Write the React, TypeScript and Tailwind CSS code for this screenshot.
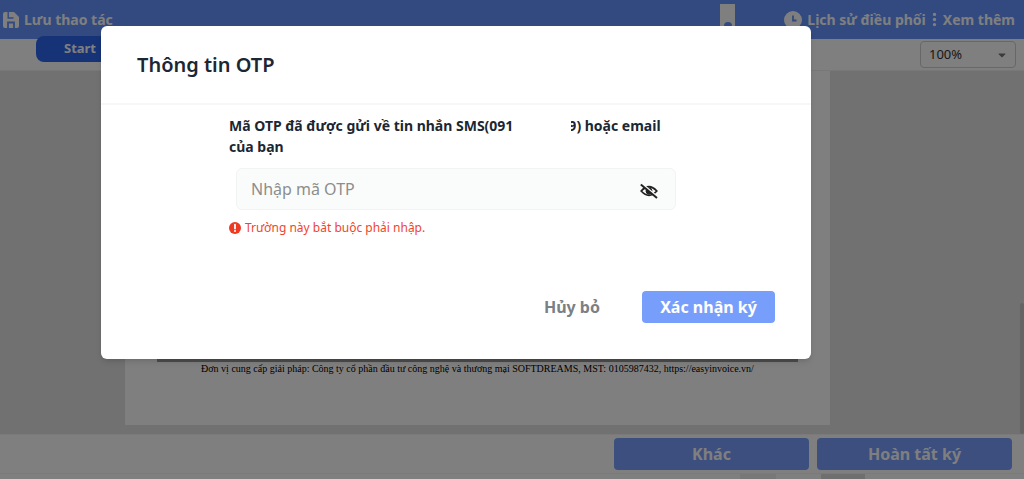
import { useState } from "react";
import { FaCaretDown } from "react-icons/fa";
import { HiDotsVertical } from "react-icons/hi";

export default function App() {
  return (
    <div className="relative flex h-screen flex-col overflow-hidden bg-white font-['Noto_Sans','Open_Sans',sans-serif]">
      <TopBar />
      <Toolbar />
      <DocumentView />
      <ActionBar />
      <OtpDialog />
    </div>
  );
}

function TopBar() {
  return (
    <header className="flex h-[39px] shrink-0 items-center bg-[#6494ff] px-2 text-sm font-bold text-white">
      <button type="button" className="-ml-[5px] flex items-center gap-[5px]">
        <SaveIcon />
        Lưu thao tác
      </button>
      <div className="ml-auto flex h-full items-center">
        <div className="mt-2 mr-[49px] flex h-full w-[15px] items-start justify-center bg-white pt-[18px]">
          <span className="h-2 w-2 rounded-full bg-[#6494ff]" />
        </div>
        <button type="button" className="flex items-center gap-[5px]">
          <ClockIcon />
          Lịch sử điều phối
        </button>
        <button type="button" className="mr-px flex items-center">
          <HiDotsVertical className="h-[17px] w-[17px]" />
          Xem thêm
        </button>
      </div>
    </header>
  );
}

function Toolbar() {
  return (
    <div className="flex h-8 shrink-0 items-center justify-between border-b border-[#f0f0f0] pr-2 pl-9">
      <button
        type="button"
        className="-mt-3 h-[26px] w-[88px] rounded-lg bg-[#2c66ee] text-[13px] font-bold text-white"
      >
        Start
      </button>
      <div className="relative">
        <select
          aria-label="Zoom"
          className="h-[27px] w-24 appearance-none rounded border border-[#d0d0d0] bg-white pl-2 text-[13px] text-[#333]"
        >
          <option>100%</option>
        </select>
        <FaCaretDown className="pointer-events-none absolute top-2 right-2 h-3 w-3 text-[#777]" />
      </div>
    </div>
  );
}

function DocumentView() {
  return (
    <main className="flex flex-1 justify-between bg-[#e3e3e3] pl-[125px]">
      <div className="mb-[9px] flex w-[705px] flex-col justify-end bg-white px-8 pb-[49px] font-['Liberation_Serif',serif] text-[10px]">
        <p className="border-t-3 border-[#999] text-center leading-[14px] text-black">
          Đơn vị cung cấp giải pháp: Công ty cổ phần đầu tư công nghệ và thương mại SOFTDREAMS, MST: 0105987432,
          https://easyinvoice.vn/
        </p>
      </div>
      <div className="h-[131px] w-1 self-end rounded-full bg-[#c8c8c8]" />
    </main>
  );
}

function ActionBar() {
  return (
    <footer className="shrink-0">
      <div className="flex justify-end gap-2 border-t border-b border-[#f4f4f4] px-3 py-[3px] text-base font-bold text-white">
        <button type="button" className="h-8 w-[195px] rounded bg-[#789eff]">
          Khác
        </button>
        <button type="button" className="h-8 w-[195px] rounded bg-[#789eff]">
          Hoàn tất ký
        </button>
      </div>
      <div className="flex h-[5px] justify-end bg-white pr-[159px]">
        <span className="mr-[45px] w-9 bg-[#f0f0f0]" />
        <span className="w-11 bg-[#dedede]" />
      </div>
    </footer>
  );
}

function OtpDialog() {
  const [visible, setVisible] = useState(false);

  return (
    <div className="absolute inset-0 bg-black/50 pt-[26px] pr-4 pl-[101px]">
      <section
        role="dialog"
        aria-labelledby="otp-title"
        className="max-w-[710px] rounded-md bg-white text-[#1b2733] shadow-md"
      >
        <h1 id="otp-title" className="border-b-2 border-[#f7f7f7] px-9 py-6 text-xl leading-[29px] font-semibold">
          Thông tin OTP
        </h1>
        <div className="pt-[10px] pr-[135px] pl-32">
          <label htmlFor="otp" className="block text-sm leading-[21px] font-bold">
            Mã OTP đã được gửi về tin nhắn SMS(091
            <span className="inline-block w-[58px]" />
            <span className="inline-flex w-[5px] justify-end overflow-hidden align-bottom">9</span>) hoặc email của bạn
          </label>
          <div className="mt-[11px] ml-[7px] flex h-[42px] items-center rounded-md border border-[#f3f3f3] bg-[#fafcfb] pr-[17px] pl-3.5">
            <input
              id="otp"
              type={visible ? "text" : "password"}
              placeholder="Nhập mã OTP"
              className="min-w-0 flex-1 bg-transparent text-base outline-none placeholder:text-[#8d8d8d]"
            />
            <button type="button" aria-label="Hiện mã OTP" className="pt-1" onClick={() => setVisible(!visible)}>
              <EyeSlashIcon />
            </button>
          </div>
          <p className="mt-2 flex items-center gap-1 text-xs leading-5 text-[#f0452d]">
            <AlertIcon />
            Trường này bắt buộc phải nhập.
          </p>
        </div>
        <div className="mt-[53px] flex justify-end gap-[26px] pr-9 pb-9 text-base font-bold">
          <button type="button" className="h-8 px-4 text-[#7a8085]">
            Hủy bỏ
          </button>
          <button type="button" className="h-8 w-[133px] rounded bg-[#789efc] text-white">
            Xác nhận ký
          </button>
        </div>
      </section>
    </div>
  );
}

function SaveIcon() {
  return (
    <svg viewBox="0 0 16 16" className="h-4 w-4" aria-hidden="true">
      <path d="M2 0H11L16 5V14Q16 16 14 16H2Q0 16 0 14V2Q0 0 2 0Z" fill="currentColor" />
      <path d="M5.200 0V6H10.500" fill="none" stroke="#6494ff" strokeWidth="1.400" />
      <path d="M5 16V10.500H11V16" fill="none" stroke="#6494ff" strokeWidth="1.800" />
    </svg>
  );
}

function ClockIcon() {
  return (
    <svg viewBox="0 0 18 18" className="h-[18px] w-[18px]" aria-hidden="true">
      <circle cx="9" cy="9" r="9" fill="currentColor" />
      <path d="M9 4.500V9.500H12.500" fill="none" stroke="#6494ff" strokeWidth="1.800" />
    </svg>
  );
}

function AlertIcon() {
  return (
    <svg viewBox="0 0 12 12" className="h-3 w-3" aria-hidden="true">
      <circle cx="6" cy="6" r="6" fill="#ee3a20" />
      <path d="M6 2.700V6.500" stroke="#fff" strokeWidth="1.800" strokeLinecap="round" />
      <circle cx="6" cy="9" r="1" fill="#fff" />
    </svg>
  );
}

function EyeSlashIcon() {
  return (
    <svg viewBox="0 0 18 16" className="h-4 w-[18px]" aria-hidden="true" fill="none" stroke="#222">
      <path d="M1.200 8Q9-.500 16.800 8Q9 16.500 1.200 8Z" strokeWidth="1.800" />
      <circle cx="9" cy="8" r="3" fill="#222" />
      <path d="M1.500 .500L17.500 14" stroke="#fafcfb" strokeWidth="2" />
      <path d="M.800 1.500L17 15" strokeWidth="2" />
    </svg>
  );
}
